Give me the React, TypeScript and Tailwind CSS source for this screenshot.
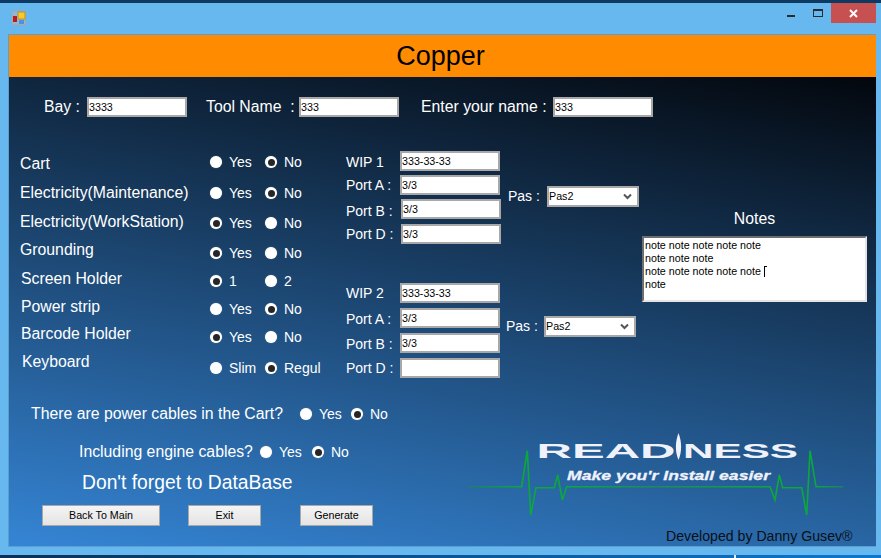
import React from "react";

function Radio({ on }: { on?: boolean }) {
  return (
    <span className="flex h-3 w-3 shrink-0 items-center justify-center rounded-full bg-white shadow-[0_0_1px_#9aa]">
      {on ? <span className="h-[7px] w-[7px] rounded-full bg-[#262626]" /> : null}
    </span>
  );
}

function Opt({ label, on, w }: { label: string; on?: boolean; w?: string }) {
  return (
    <span className={`flex items-center gap-[7px] text-[14px] text-white ${w ?? ""}`}>
      <Radio on={on} />
      {label}
    </span>
  );
}

function Field({ value, cls }: { value: string; cls?: string }) {
  return (
    <input
      readOnly
      value={value}
      className={`h-5 w-[100px] border-2 border-[#a8a8a8] bg-white pl-0 text-[10.7px] text-black outline-none ${cls ?? ""}`}
    />
  );
}

function Pas() {
  return (
    <div className="flex h-[21px] w-[92px] items-center justify-between border-2 border-[#a8a8a8] bg-white pr-[5px] text-[10.7px] text-black">
      <span>Pas2</span>
      <svg width="9" height="7" viewBox="0 0 9 7" fill="none" stroke="#555" strokeWidth="2">
        <path d="M1 1.5 4.5 5 8 1.5" />
      </svg>
    </div>
  );
}

function PortRow({ label, value, cls, inputCls, labelCls }: { label: string; value: string; cls?: string; inputCls?: string; labelCls?: string }) {
  return (
    <div className={`flex h-5 items-center ${cls ?? ""}`}>
      <span className={`w-[54px] text-[14px] text-white ${labelCls ?? ""}`}>{label}</span>
      <Field value={value} cls={inputCls} />
    </div>
  );
}

export default function App() {
  return (
    <div className="flex h-[558px] w-[881px] flex-col overflow-hidden bg-[#66b8ee] font-['Liberation_Sans',Arial,sans-serif]">
      <div className="h-[3px] shrink-0 bg-[#0e3a62]" />
      {/* title bar */}
      <div className="flex h-[31px] shrink-0 items-start pl-3">
        <svg width="14" height="14" viewBox="0 0 14 14" className="mt-[8px]">
          <rect x="0.5" y="0.5" width="13" height="13" fill="#8fb8d8" stroke="#b0a8a0" />
          <rect x="6" y="1" width="7" height="7" fill="#f6c92c" stroke="#b89428" />
          <rect x="1" y="5" width="4" height="6" fill="#b81c1c" />
          <rect x="7" y="9" width="5" height="4" fill="#4f8ee6" />
        </svg>
        <div className="ml-auto mr-[5px] flex items-start">
          <span className="mr-[18px] mt-[12px] h-[2px] w-[8px] bg-[#2b2b2b]" />
          <span className="mr-[8px] mt-[6px] h-[8px] w-[10px] border border-t-2 border-[#2b2b2b]" />
          <span className="flex h-5 w-[45px] items-center justify-center bg-[#c75050]">
            <svg width="9" height="9" viewBox="0 0 9 9" stroke="#fff" strokeWidth="2">
              <path d="M1 1 8 8M8 1 1 8" />
            </svg>
          </span>
        </div>
      </div>

      {/* form panel */}
      <div className="ml-2 mr-[5px] flex h-[513px] shrink-0 flex-col border border-r-0 border-[#5a9fd0]">
        <div className="flex h-[42px] shrink-0 items-center justify-center bg-[#ff8c00] pr-[4px] text-[27px] text-black">Copper</div>
        <div className="flex flex-1 flex-col bg-[linear-gradient(190deg,#03070d,#3585d5)]">
          {/* header row */}
          <div className="mt-5 flex h-5 items-center text-[15.8px] text-white">
            <span className="ml-[35px] w-[43px]">Bay :</span>
            <Field value="3333" />
            <span className="ml-[19px] w-[93px] whitespace-nowrap">Tool Name&nbsp; :</span>
            <Field value="333" />
            <span className="ml-[22px] w-[132px] whitespace-nowrap">Enter your name :</span>
            <Field value="333" />
          </div>

          {/* main block */}
          <div className="mt-[34px] flex h-[228px] text-white">
            <div className="flex w-[201px] shrink-0 flex-col pl-[11px] pt-px text-[15.8px]">
              <div className="h-5">Cart</div>
              <div className="mt-[9px] h-5">Electricity(Maintenance)</div>
              <div className="mt-[9px] h-5">Electricity(WorkStation)</div>
              <div className="mt-2 h-5">Grounding</div>
              <div className="ml-px mt-[9px] h-5">Screen Holder</div>
              <div className="ml-px mt-2 h-5">Power strip</div>
              <div className="ml-px mt-[7px] h-5">Barcode Holder</div>
              <div className="ml-[2px] mt-2 h-5">Keyboard</div>
            </div>
            <div className="flex w-[136px] shrink-0 flex-col pt-px">
              <div className="flex h-5 items-center"><Opt label="Yes" w="w-[55px]" /><Opt label="No" on /></div>
              <div className="mt-[11px] flex h-5 items-center"><Opt label="Yes" w="w-[55px]" /><Opt label="No" on /></div>
              <div className="mt-[10px] flex h-5 items-center"><Opt label="Yes" on w="w-[55px]" /><Opt label="No" /></div>
              <div className="mt-[10px] flex h-5 items-center"><Opt label="Yes" on w="w-[55px]" /><Opt label="No" /></div>
              <div className="mt-2 flex h-5 items-center"><Opt label="1" on w="w-[55px]" /><Opt label="2" /></div>
              <div className="mt-2 flex h-5 items-center"><Opt label="Yes" w="w-[55px]" /><Opt label="No" on /></div>
              <div className="mt-2 flex h-5 items-center"><Opt label="Yes" on w="w-[55px]" /><Opt label="No" /></div>
              <div className="mt-[11px] flex h-5 items-center"><Opt label="Slim" w="w-[55px]" /><Opt label="Regul" on /></div>
            </div>
            <div className="flex w-[160px] shrink-0 flex-col">
              <PortRow label="WIP 1" value="333-33-33" labelCls="pt-[2px]" />
              <PortRow label="Port A :" value="3/3" cls="mt-1" />
              <PortRow label="Port B :" value="3/3" cls="mt-1" inputCls="ml-px" labelCls="pt-1" />
              <PortRow label="Port D :" value="3/3" cls="mt-[5px]" inputCls="ml-px" />
              <PortRow label="WIP 2" value="333-33-33" cls="mt-[39px]" />
              <PortRow label="Port A :" value="3/3" cls="mt-[5px]" labelCls="pt-[2px]" />
              <PortRow label="Port B :" value="3/3" cls="mt-[5px]" labelCls="pt-[2px]" />
              <PortRow label="Port D :" value="" cls="mt-[5px]" />
            </div>
            <div className="flex w-[136px] shrink-0 flex-col text-[14px]">
              <div className="mt-[35px] flex h-[21px] items-center pl-[2px]">
                <span className="w-[39px]">Pas :</span>
                <Pas />
              </div>
              <div className="mt-[109px] flex h-[21px] items-center">
                <span className="w-[38px]">Pas :</span>
                <Pas />
              </div>
            </div>
            <div className="flex w-[225px] shrink-0 flex-col">
              <div className="mt-[58px] h-5 text-center text-[15.8px] leading-5">Notes</div>
              <div className="mt-[7px] h-[66px] border-2 border-[#e4e4e4] border-l-[#6e6e6e] border-t-[#6e6e6e] bg-white pl-px pt-px text-[10.7px] leading-[13px] text-black">
                <div>note note note note note</div>
                <div>note note note</div>
                <div className="flex items-center">note note note note note
                  <span className="ml-[3px] h-[11px] w-[3px] border-l border-t border-black" />
                </div>
                <div>note</div>
              </div>
            </div>
          </div>

          {/* bottom block */}
          <div className="flex flex-1">
            <div className="flex w-[459px] shrink-0 flex-col text-white">
              <div className="mt-[25px] flex h-5 items-center text-[15.8px]">
                <span className="ml-[22px] w-[269px]">There are power cables in the Cart?</span>
                <Opt label="Yes" w="w-[51px]" />
                <Opt label="No" on />
              </div>
              <div className="mt-[18px] flex h-5 items-center text-[15.8px]">
                <span className="ml-[70px] w-[181px]">Including engine cables?</span>
                <Opt label="Yes" w="w-[52px]" />
                <Opt label="No" on />
              </div>
              <div className="ml-[73px] mt-[9px] h-6 text-[19.3px] leading-6">Don't forget to DataBase</div>
              <div className="ml-[33px] mt-[10px] flex text-[10.7px] text-black">
                <div className="flex h-[21px] w-[118px] items-center justify-center border border-[#a8a8a8] bg-[linear-gradient(#f4f4f4,#e4e4e4)]">Back To Main</div>
                <div className="ml-[28px] flex h-[21px] w-[73px] items-center justify-center border border-[#a8a8a8] bg-[linear-gradient(#f4f4f4,#e4e4e4)]">Exit</div>
                <div className="ml-[39px] flex h-[21px] w-[73px] items-center justify-center border border-[#a8a8a8] bg-[linear-gradient(#f4f4f4,#e4e4e4)]">Generate</div>
              </div>
            </div>
            <div className="flex flex-1 flex-col">
              <svg width="400" height="90" viewBox="0 0 400 90" className="mt-[48px] shrink-0" fill="none">
                <defs>
                  <linearGradient id="ecg" gradientUnits="userSpaceOnUse" x1="0" y1="0" x2="376" y2="0">
                    <stop offset="0" stopColor="#1f7f66" />
                    <stop offset="0.14" stopColor="#0ba83a" />
                    <stop offset="0.3" stopColor="#0ba83a" />
                    <stop offset="0.5" stopColor="#1f8a5a" />
                    <stop offset="0.78" stopColor="#0ba83a" />
                    <stop offset="0.92" stopColor="#0ba83a" />
                    <stop offset="1" stopColor="#1f7f66" />
                  </linearGradient>
                </defs>
                <polyline
                  points="0.3,59.7 53.7,59.7 59.3,23.7 62.7,88 68,60.7 86.3,60.7 89.7,48 94.3,73 98.7,59.7 302,59.7 307,73 311.3,48 314.7,60.7 333.7,60.7 338.7,88 342,23.7 348,59.7 375.3,59.7"
                  stroke="url(#ecg)"
                  strokeWidth="1.6"
                />
                <text x="68.5" y="31" fill="#f0f2fb" fontFamily="'Liberation Sans', sans-serif" fontSize="21" fontWeight="700" textLength="139" lengthAdjust="spacingAndGlyphs">READ</text>
                <path d="M210.5 6 C214 15 214 25 210.5 33 C207 25 207 15 210.5 6Z" fill="#f0f2fb" />
                <text x="215" y="31" fill="#f0f2fb" fontFamily="'Liberation Sans', sans-serif" fontSize="21" fontWeight="700" textLength="115" lengthAdjust="spacingAndGlyphs">NESS</text>
                <text x="99" y="53" fill="#f0f2fb" stroke="#f0f2fb" strokeWidth="0.3" fontFamily="'Liberation Sans', sans-serif" fontSize="13.5" fontWeight="700" fontStyle="italic" textLength="203" lengthAdjust="spacingAndGlyphs">Make you'r Install easier</text>
              </svg>
              <div className="ml-[198px] mt-[9px] text-[14.15px] leading-5 text-[#0a0f18]">Developed by Danny Gusev®</div>
            </div>
          </div>
        </div>
      </div>
      <div className="h-[8px] shrink-0" />
      <div className="flex-1 bg-[linear-gradient(90deg,#0c2f55,#0a78d0)]">
        <div className="ml-[734px] h-full w-[2px] bg-[#dfeffa]" />
      </div>
    </div>
  );
}
